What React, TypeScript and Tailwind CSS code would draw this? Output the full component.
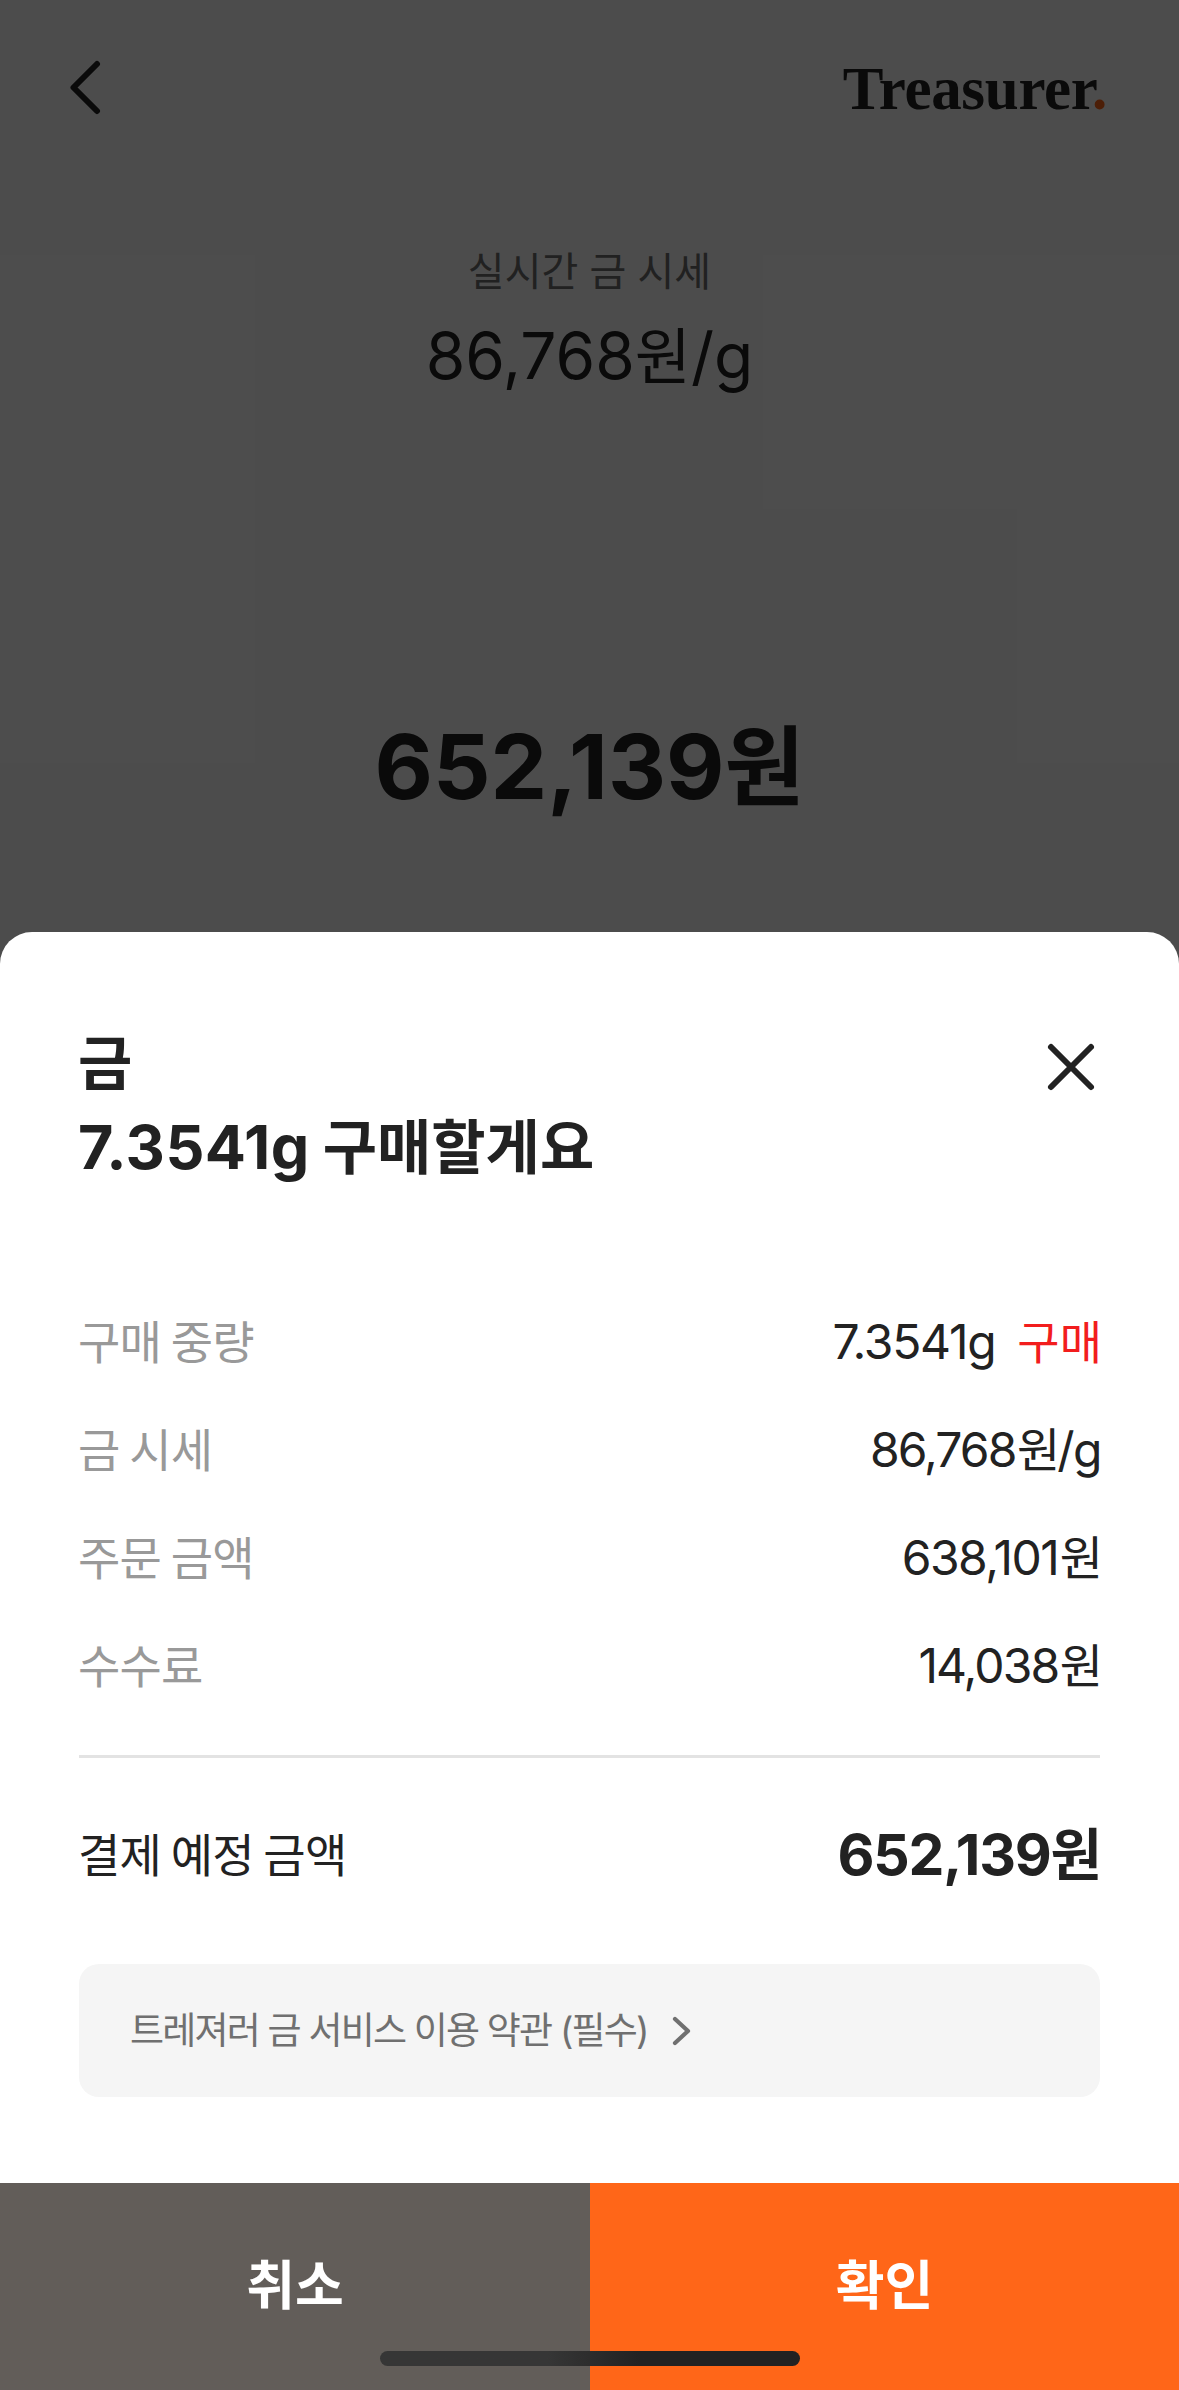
import type { ReactNode } from "react";

// 한글은 숫자보다 살짝 작게 표시
function Ko({ className = "", children }: { className?: string; children: ReactNode }) {
  return <span className={`leading-none tracking-normal ${className}`}>{children}</span>;
}

const rows = [
  {
    label: "구매 중량",
    value: (
      <>
        <span className="tracking-[-1.25px]">7.3541g</span>
        <Ko className="ml-[22px] -mr-[2px] text-[46px] text-[#f21d1d]">구매</Ko>
      </>
    ),
  },
  {
    label: "금 시세",
    value: (
      <>
        <span className="tracking-[-1.9px]">86,768</span>
        <Ko className="ml-[1.5px] -mr-[3px] text-[47px]">원</Ko>
        <span className="-mr-[1px] tracking-[-1.5px]">/g</span>
      </>
    ),
  },
  {
    label: "주문 금액",
    value: (
      <>
        <span className="tracking-[-1.5px]">638,101</span>
        <Ko className="ml-[1.5px] -mr-[3px] text-[47px]">원</Ko>
      </>
    ),
  },
  {
    label: "수수료",
    value: (
      <>
        <span className="tracking-[-1.9px]">14,038</span>
        <Ko className="ml-[1.5px] -mr-[3px] text-[47px]">원</Ko>
      </>
    ),
  },
];

function Background() {
  return (
    <div className="text-center text-[#222222]">
      <header className="flex h-[176px] items-center justify-between pl-[68px] pr-[72px]">
        <svg className="h-14 w-[34px]" viewBox="0 0 34 56" fill="none" stroke="currentColor" strokeWidth="6" strokeLinecap="round" strokeLinejoin="round">
          <path d="M29 4L5.5 27.5L29 51" />
        </svg>
        <span className="font-['Liberation_Serif',serif] text-[61px] font-bold leading-none tracking-[-0.3px]">
          Treasurer<span className="text-[#ff6618]">.</span>
        </span>
      </header>

      <p className="mt-[66px] text-[40px] leading-[60px] text-[#707070]">실시간 금 시세</p>
      <p className="mt-[14px] text-[64px] leading-[80px]">
        86,768<Ko className="text-[61px]">원</Ko>/g
      </p>
      <p className="mt-[316px] text-[90px] font-bold leading-[110px]">
        652,139<Ko className="text-[87px]">원</Ko>
      </p>
    </div>
  );
}

export default function App() {
  return (
    <div className="relative h-[2390px] w-[1179px] overflow-hidden bg-white font-['Inter','Noto_Sans_CJK_KR',sans-serif]">
      <Background />

      {/* Dimmed backdrop */}
      <div className="absolute inset-0 bg-black/70" />

      {/* Bottom sheet */}
      <section className="absolute inset-x-0 bottom-0 flex h-[1458px] flex-col rounded-t-[32px] bg-white text-[#222222]">
        <div className="px-[79px] pt-[89px]">
          <div className="flex items-start justify-between">
            <h2 className="-ml-[1px] text-[61px] font-bold leading-[84px]">
              <Ko className="text-[59px]">금</Ko>
              <br />
              <span className="tracking-[0.4px]">7.3541g</span>
              <Ko className="ml-[13px] text-[59px] tracking-[-0.3px]">구매할게요</Ko>
            </h2>
            <button className="mt-[17px]">
              <svg className="size-[58px]" viewBox="0 0 58 58" fill="none" stroke="currentColor" strokeWidth="6" strokeLinecap="round">
                <path d="M9 9L49 49M49 9L9 49" />
              </svg>
            </button>
          </div>

          <dl className="mt-[99px]">
            {rows.map((row) => (
              <div key={row.label} className="flex h-[108px] items-center justify-between whitespace-nowrap">
                <dt className="-ml-[1px] text-[46px] tracking-[-0.8px] [word-spacing:-2.5px] text-[#999999]">{row.label}</dt>
                <dd className="text-[48px]">{row.value}</dd>
              </div>
            ))}
          </dl>

          <hr className="mt-[35px] border-0 border-t-[3px] border-[#e3e3e3]" />

          <div className="mt-[57px] flex h-20 items-center justify-between whitespace-nowrap">
            <span className="-ml-[1px] text-[46px] tracking-[-0.8px] [word-spacing:-2.5px]">결제 예정 금액</span>
            <strong className="text-[57px] font-bold leading-[80px] tracking-[-1.25px]">
              652,139<Ko className="-mr-[2px] text-[56px]">원</Ko>
            </strong>
          </div>

          <a className="mt-[69px] flex h-[133px] items-center rounded-[20px] bg-[#f5f5f5] pl-[51px] text-[#707070]">
            <span className="text-[37px] leading-[60px] tracking-[-1.8px]">트레져러 금 서비스 이용 약관 (필수)</span>
            <svg className="ml-[22px] h-9 w-6" viewBox="0 0 24 36" fill="none" stroke="currentColor" strokeWidth="4.2" strokeLinecap="round" strokeLinejoin="round">
              <path d="M5 6L18 18L5 30" />
            </svg>
          </a>
        </div>

        <div className="mt-auto grid h-[207px] grid-cols-[590px_1fr] text-[53px] font-bold text-white">
          <button className="bg-[#625d59]">취소</button>
          <button className="bg-[#ff6618]">확인</button>
        </div>
      </section>

      {/* Home indicator */}
      <div className="absolute bottom-6 left-[380px] h-[15px] w-[420px] rounded-full bg-linear-to-r from-[#363636] from-40% to-[#222222] to-62%" />
    </div>
  );
}
